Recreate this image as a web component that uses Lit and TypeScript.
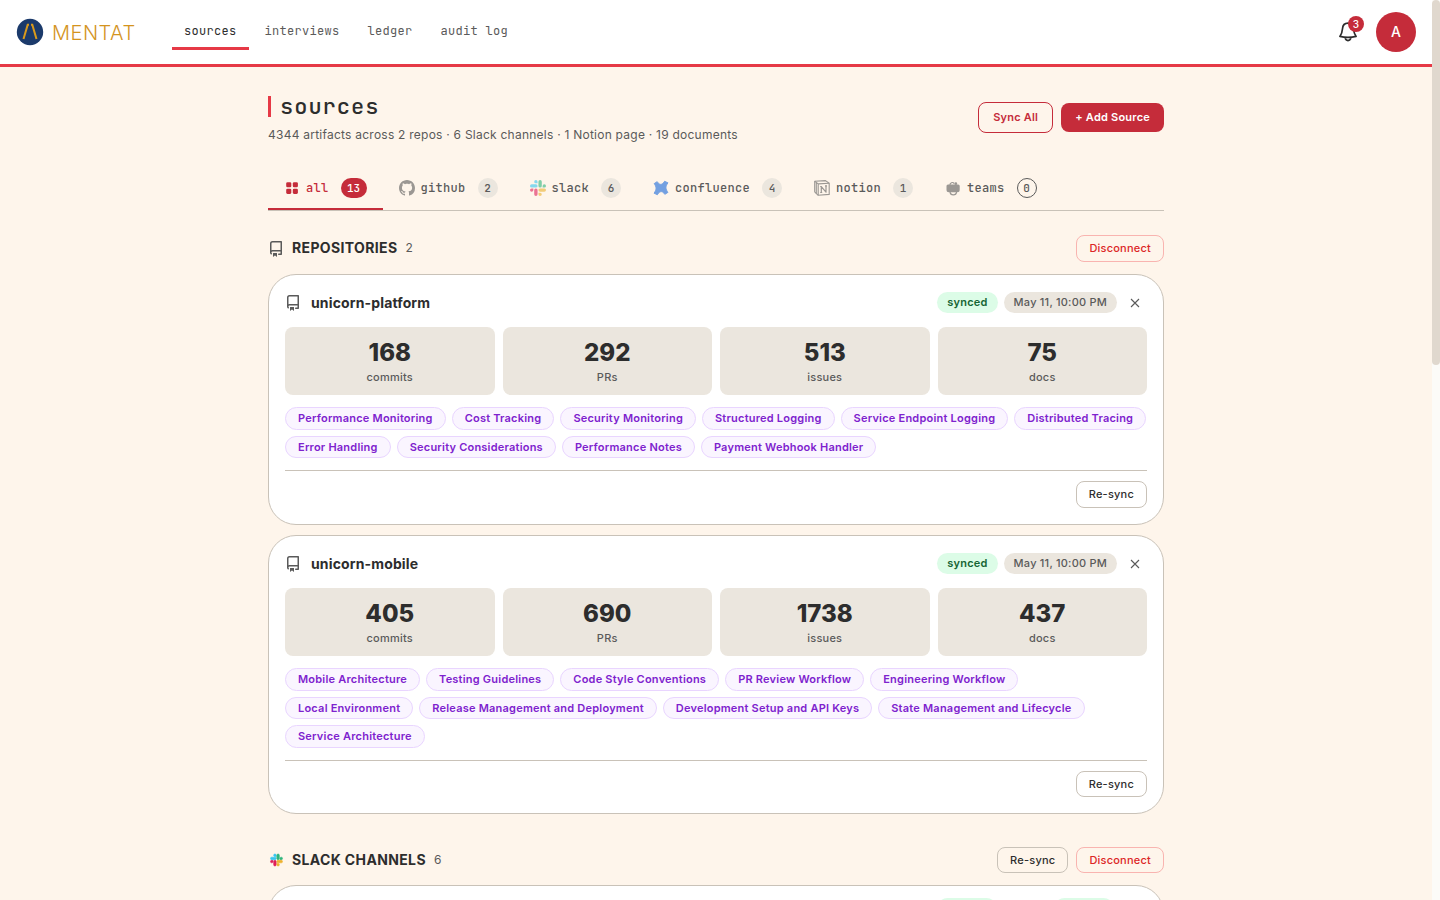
import { LitElement, html, css, svg } from "lit";
import { customElement, property } from "lit/decorators.js";

const repoIcon = html`<svg width="16" height="16" viewBox="0 0 16 16" fill="currentColor"><path d="M2 2.5A2.5 2.5 0 0 1 4.5 0h8.75a.75.75 0 0 1 .75.75v12.5a.75.75 0 0 1-.75.75h-2.5a.75.75 0 0 1 0-1.5h1.75v-2h-8a1 1 0 0 0-.714 1.7.75.75 0 1 1-1.072 1.05A2.495 2.495 0 0 1 2 11.5Zm10.5-1h-8a1 1 0 0 0-1 1v6.708A2.486 2.486 0 0 1 4.5 9h8ZM5 12.25a.25.25 0 0 1 .25-.25h3.5a.25.25 0 0 1 .25.25v3.25a.25.25 0 0 1-.4.2l-1.45-1.087a.249.249 0 0 0-.3 0L5.4 15.7a.25.25 0 0 1-.4-.2Z"/></svg>`;

const slackPaths = svg`
  <path fill="#E01E5A" stroke="#E01E5A" d="M5.042 15.165a2.528 2.528 0 0 1-2.52 2.523A2.528 2.528 0 0 1 0 15.165a2.527 2.527 0 0 1 2.522-2.52h2.52v2.52zM6.313 15.165a2.527 2.527 0 0 1 2.521-2.52 2.527 2.527 0 0 1 2.521 2.52v6.313A2.528 2.528 0 0 1 8.834 24a2.528 2.528 0 0 1-2.521-2.522v-6.313z"/>
  <path fill="#36C5F0" stroke="#36C5F0" d="M8.834 5.042a2.528 2.528 0 0 1-2.521-2.52A2.528 2.528 0 0 1 8.834 0a2.528 2.528 0 0 1 2.521 2.522v2.52H8.834zM8.834 6.313a2.528 2.528 0 0 1 2.521 2.521 2.528 2.528 0 0 1-2.521 2.521H2.522A2.528 2.528 0 0 1 0 8.834a2.528 2.528 0 0 1 2.522-2.521h6.312z"/>
  <path fill="#2EB67D" stroke="#2EB67D" d="M18.956 8.834a2.528 2.528 0 0 1 2.522-2.521A2.528 2.528 0 0 1 24 8.834a2.528 2.528 0 0 1-2.522 2.521h-2.522V8.834zM17.688 8.834a2.528 2.528 0 0 1-2.523 2.521 2.527 2.527 0 0 1-2.52-2.521V2.522A2.527 2.527 0 0 1 15.165 0a2.528 2.528 0 0 1 2.523 2.522v6.312z"/>
  <path fill="#ECB22E" stroke="#ECB22E" d="M15.165 18.956a2.528 2.528 0 0 1 2.523 2.522A2.528 2.528 0 0 1 15.165 24a2.527 2.527 0 0 1-2.52-2.522v-2.522h2.52zM15.165 17.688a2.527 2.527 0 0 1-2.52-2.523 2.526 2.526 0 0 1 2.52-2.52h6.313A2.527 2.527 0 0 1 24 15.165a2.528 2.528 0 0 1-2.522 2.523h-6.313z"/>`;

const tabIcons: Record<string, unknown> = {
  all: html`<svg width="16" height="16" viewBox="0 0 16 16" fill="#c52c3a"><rect x="2.200" y="2.200" width="5.100" height="5.100" rx="1.3"/><rect x="8.800" y="2.200" width="5.100" height="5.100" rx="1.3"/><rect x="2.200" y="8.800" width="5.100" height="5.100" rx="1.3"/><rect x="8.800" y="8.800" width="5.100" height="5.100" rx="1.3"/></svg>`,
  github: html`<svg class="dim" width="16" height="16" viewBox="0 0 16 16" fill="#5a5a5a"><path d="M8 0C3.58 0 0 3.58 0 8c0 3.54 2.29 6.53 5.47 7.59.4.07.55-.17.55-.38 0-.19-.01-.82-.01-1.49-2.01.37-2.53-.49-2.69-.94-.09-.23-.48-.94-.82-1.13-.28-.15-.68-.52-.01-.53.63-.01 1.08.58 1.23.82.72 1.21 1.87.87 2.33.66.07-.52.28-.87.51-1.07-1.78-.2-3.64-.89-3.64-3.95 0-.87.31-1.59.82-2.15-.08-.2-.36-1.02.08-2.12 0 0 .67-.21 2.2.82.64-.18 1.32-.27 2-.27s1.36.09 2 .27c1.53-1.04 2.2-.82 2.2-.82.44 1.1.16 1.92.08 2.12.51.56.82 1.27.82 2.15 0 3.07-1.87 3.75-3.65 3.95.29.25.54.73.54 1.48 0 1.07-.01 1.93-.01 2.2 0 .21.15.46.55.38A8.01 8.01 0 0 0 16 8c0-4.42-3.58-8-8-8z"/></svg>`,
  slack: html`<svg class="dim" width="16" height="16" viewBox="0 0 24 24" stroke-width="0">${slackPaths}</svg>`,
  confluence: html`<svg class="dim" width="16" height="16" viewBox="0 0 16 16" fill="#1868db" stroke="#1868db" stroke-width="1" stroke-linejoin="round"><path d="M1.200 3.600 4.200 1.700C6.500 5.300 9 5.400 11.600 1.300L14.900 2.800C12.200 6.800 12.400 9 14.900 12.400L11.800 14.300C9.500 10.700 7 10.600 4.400 14.700L1.100 13.200C3.800 9.200 3.600 7 1.200 3.600Z"/></svg>`,
  notion: html`<svg class="dim" width="16" height="16" viewBox="0 0 16 16" fill="none" stroke="#5a5a5a" stroke-width="1.100" stroke-linejoin="round"><path d="M.7 1.200 11.500.6l3.700 2.600v11.200l-11 .9L.7 11.800z"/><path d="M.7 1.200l3.500 2.700 11-.7M4.200 3.900v11.400M2.300 3v10.600"/><path d="M7.300 12.500V6.600l4.700 5.600V5.900M6.200 6.500h1.600M11 5.900h2M6.200 12.500h2" stroke-width="1.200"/></svg>`,
  teams: html`<svg class="dim" width="16" height="16" viewBox="0 0 16 16" fill="#5a5a5a"><path d="M5 5.200a2.300 2.300 0 0 1 4.200-1.600" fill="none" stroke="#5a5a5a" stroke-width="1.200"/><circle cx="10.800" cy="3.700" r="1.400"/><path d="M3 4.600h10.200a1.500 1.500 0 0 1 1.500 1.500v3.600a2.500 2.500 0 0 1-2.500 2.500H4a2.500 2.500 0 0 1-2.500-2.500V6.100A1.500 1.500 0 0 1 3 4.600z"/><path d="M5 11.600c.2 2.300 1.500 3.300 3.300 3.300s3.100-1 3.300-3.300" fill="none" stroke="#5a5a5a" stroke-width="1.200"/></svg>`,
};

interface Repo {
  name: string;
  stats: [string, string][];
  topics: string[];
}

const repos: Repo[] = [
  {
    name: "unicorn-platform",
    stats: [["168", "commits"], ["292", "PRs"], ["513", "issues"], ["75", "docs"]],
    topics: ["Performance Monitoring", "Cost Tracking", "Security Monitoring", "Structured Logging", "Service Endpoint Logging", "Distributed Tracing", "Error Handling", "Security Considerations", "Performance Notes", "Payment Webhook Handler"],
  },
  {
    name: "unicorn-mobile",
    stats: [["405", "commits"], ["690", "PRs"], ["1738", "issues"], ["437", "docs"]],
    topics: ["Mobile Architecture", "Testing Guidelines", "Code Style Conventions", "PR Review Workflow", "Engineering Workflow", "Local Environment", "Release Management and Deployment", "Development Setup and API Keys", "State Management and Lifecycle", "Service Architecture"],
  },
];

const tabs: [string, number][] = [["all", 13], ["github", 2], ["slack", 6], ["confluence", 4], ["notion", 1], ["teams", 0]];

const shared = css`
  * { box-sizing: border-box; }
  svg { display: block; flex: none; }
  .btn {
    height: 26.5px;
    padding: 0 12px;
    border: 1px solid #c9c2b8;
    border-radius: 8px;
    background: transparent;
    color: #2d2d2d;
    font: 500 11px/24.5px Inter, sans-serif;
    letter-spacing: 0.22px;
    white-space: nowrap;
  }
  .btn.danger { color: #dc2626; border-color: #f9b4b0; }
`;

@customElement("repo-card")
class RepoCard extends LitElement {
  @property({ attribute: false }) repo!: Repo;

  static styles = [shared, css`
    :host {
      display: block;
      box-sizing: border-box;
      padding: 16px;
      border: 1px solid #c9c2b8;
      border-radius: 28px;
      background: #fff;
    }
    .head { display: flex; align-items: center; height: 24px; margin-bottom: 12px; }
    .head svg { color: #5a5a5a; }
    .name { margin-left: 10px; font-size: 14px; font-weight: 700; letter-spacing: 0.14px; flex: 1; }
    .pill { height: 21px; line-height: 21px; padding: 0 10px; border-radius: 11px; font-size: 11px; font-weight: 500; letter-spacing: 0.22px; background: #ebe6de; color: #5a5a5a; margin-left: 6px; }
    .pill.ok { background: #dcfce7; color: #166534; font-weight: 600; }
    .close { width: 24px; height: 24px; display: grid; place-items: center; margin-left: 6px; }
    .stats { display: grid; grid-template-columns: repeat(4, 1fr); gap: 8px; margin-bottom: 12px; }
    .stat { height: 68.5px; border-radius: 8px; background: #ebe6de; text-align: center; padding-top: 10px; }
    .num { font-size: 24px; line-height: 32px; font-weight: 800; letter-spacing: 0; }
    .label { font-size: 11px; line-height: 16px; font-weight: 500; color: #5a5a5a; letter-spacing: 0.22px; }
    .topics { display: flex; flex-wrap: wrap; gap: 6px; }
    .topic { height: 22.5px; padding: 0 12px; border: 1px solid #e9d5ff; border-radius: 12px; background: #faf5ff; color: #7e22ce; font-size: 11px; line-height: 20.5px; font-weight: 600; letter-spacing: 0.22px; white-space: nowrap; }
    .foot { display: flex; justify-content: flex-end; margin-top: 12px; padding-top: 10px; border-top: 1px solid #c9c2b8; }
  `];

  render() {
    return html`
      <div class="head">
        ${repoIcon}<span class="name">${this.repo.name}</span>
        <span class="pill ok">synced</span><span class="pill">May 11, 10:00 PM</span>
        <span class="close"><svg width="10" height="10" viewBox="0 0 10 10" stroke="#5a5a5a" stroke-width="1.1"><path d="M1 1l8 8M9 1L1 9"/></svg></span>
      </div>
      <div class="stats">${this.repo.stats.map(([n, l]) => html`<div class="stat"><div class="num">${n}</div><div class="label">${l}</div></div>`)}</div>
      <div class="topics">${this.repo.topics.map((t) => html`<span class="topic">${t}</span>`)}</div>
      <div class="foot"><button class="btn">Re-sync</button></div>
    `;
  }
}

@customElement("app-root")
class AppRoot extends LitElement {
  static styles = [shared, css`
    :host {
      display: flex;
      height: 900px;
      overflow: hidden;
      background: #fef5eb;
      color: #2d2d2d;
      font-family: Inter, sans-serif;
    }
    .page { flex: 1; min-width: 0; display: flex; flex-direction: column; }
    .scroll { width: 8px; background: #fcfbf8; }
    .thumb { height: 365px; border-radius: 4px; background: #e0d8ce; }
    .mono { font-family: "JetBrains Mono", "DejaVu Sans Mono", monospace; }
    header { flex: none; height: 67px; border-bottom: 3px solid #e63946; background: #fff; display: flex; align-items: center; padding: 0 16px; }
    .brand { display: flex; align-items: center; width: 156px; color: #d4941e; font-size: 20px; font-weight: 300; letter-spacing: 0.5px; }
    .brand svg { margin-right: 8px; }
    .brand span { padding-top: 1px; }
    nav { display: flex; gap: 4px; flex: 1; font-size: 12px; letter-spacing: 0.3px; color: #5a5a5a; }
    nav span { padding: 2px 12px 0; height: 36px; line-height: 30px; border-bottom: 3px solid transparent; white-space: pre; }
    nav .on { color: #2d2d2d; border-color: #e63946; }
    .bell { position: relative; margin-right: 18px; }
    .bell b { position: absolute; left: 10px; top: -6px; width: 16px; height: 16px; border-radius: 8px; background: #c52c3a; color: #fff; font: 500 10px/16px Inter, sans-serif; text-align: center; }
    .avatar { width: 40px; height: 40px; border-radius: 20px; background: #c52c3a; color: #fff; font-size: 14px; font-weight: 500; line-height: 40px; text-align: center; }
    main { width: 896px; margin: 0 auto; padding-top: 29px; flex: 1; min-height: 0; }
    .top { display: flex; align-items: flex-start; height: 70px; }
    .titles { flex: 1; }
    h1 { margin: 0; display: flex; align-items: center; height: 21px; padding-left: 9px; border-left: 3px solid #e63946; font-size: 22px; font-weight: 500; letter-spacing: 1px; }
    .sub { margin-top: 10px; font-size: 12px; line-height: 16px; color: #5a5a5a; letter-spacing: 0.24px; }
    .sync, .add { height: 30.5px; border-radius: 8px; font-size: 11px; font-weight: 600; letter-spacing: 0.22px; padding: 0 14px; line-height: 28px; }
    .sync { margin-top: 6px; border: 1px solid #c52c3a; color: #c52c3a; }
    .add { margin: 7px 0 0 8px; height: 28.5px; background: #c52c3a; color: #fff; }
    .tabs { display: flex; height: 45px; border-bottom: 1px solid #c9c2b8; }
    .tab { display: flex; align-items: center; height: 44px; padding: 2px 16px 0; font-size: 12px; font-weight: 500; letter-spacing: 0.3px; color: #5a5a5a; border-bottom: 2px solid transparent; }
    .tab svg { margin-right: 6px; }
    .dim { opacity: 0.6; }
    .count { margin-left: 12px; min-width: 20px; height: 20px; line-height: 20px; border-radius: 10px; background: #ebe6de; font-size: 11px; font-weight: 500; letter-spacing: 0; text-align: center; }
    .tab.on { color: #c52c3a; border-color: #c52c3a; }
    .on .count { background: #c52c3a; color: #fff; width: 26px; }
    .count.zero { background: transparent; border: 1px solid #5a5a5a; line-height: 18px; }
    .section { display: flex; align-items: center; height: 26.5px; margin: 24px 0 12px; gap: 8px; }
    .section.later { margin-top: 32.5px; }
    .section > svg { color: #5a5a5a; margin-top: 1px; }
    .section.later > svg { margin-top: 0; }
    .section h2 { margin: 0; padding-bottom: 1px; font-size: 14px; font-weight: 700; letter-spacing: 0.36px; }
    .section i { font: 400 12px Inter, sans-serif; color: #5a5a5a; flex: 1; padding-bottom: 1px; }
    repo-card + repo-card { margin-top: 10px; }
    .stub { height: 200px; border: 1px solid #c9c2b8; border-radius: 28px; background: #fff; padding: 12px 49px 0 0; display: flex; justify-content: flex-end; gap: 57px; }
    .stub span { width: 60px; height: 21px; border-radius: 11px; background: #dcfce7; }
  `];

  render() {
    return html`
      <div class="page">
        <header>
          <div class="brand">
            <svg width="28" height="28" viewBox="0 0 28 28"><circle cx="14" cy="14" r="13.200" fill="#1b3a6b"/><path d="M7.500 21 11.700 6.800h1.300M15 6.800h1.300L20.500 21" fill="none" stroke="#d99a1c" stroke-width="2"/></svg><span>MENTAT</span>
          </div>
          <nav class="mono"><span class="on">sources</span><span>interviews</span><span>ledger</span><span>audit log</span></nav>
          <div class="bell">
            <svg width="20" height="20" viewBox="0 0 20 20" fill="none" stroke="#2d2d2d" stroke-width="1.700" stroke-linejoin="round"><path d="M10 1.200c-3.300 0-5.300 2.400-5.500 5.600-.2 3-.8 5-2.600 7.600q8.100 1.800 16.200 0c-1.800-2.600-2.400-4.600-2.600-7.600-.2-3.200-2.200-5.600-5.500-5.600zM7 15c.3 2.500 1.400 3.600 3 3.600s2.700-1.100 3-3.600"/></svg><b>3</b>
          </div>
          <div class="avatar">A</div>
        </header>
        <main>
          <div class="top">
            <div class="titles">
              <h1 class="mono">sources</h1>
              <div class="sub">4344 artifacts across 2 repos · 6 Slack channels · 1 Notion page · 19 documents</div>
            </div>
            <div class="sync">Sync All</div>
            <div class="add">+ Add Source</div>
          </div>
          <div class="tabs mono">
            ${tabs.map(([name, n]) => html`<div class="tab ${name === "all" ? "on" : ""}">${tabIcons[name]}${name}<span class="count ${n ? "" : "zero"}">${n}</span></div>`)}
          </div>
          <div class="section">${repoIcon}<h2>REPOSITORIES</h2><i>2</i><button class="btn danger">Disconnect</button></div>
          ${repos.map((r) => html`<repo-card .repo=${r}></repo-card>`)}
          <div class="section later">
            <svg width="16" height="16" viewBox="-5 -4 32 32" stroke-width="1.200">${slackPaths}</svg>
            <h2>SLACK CHANNELS</h2><i>6</i><button class="btn">Re-sync</button><button class="btn danger">Disconnect</button>
          </div>
          <div class="stub"><span></span><span></span></div>
        </main>
      </div>
      <div class="scroll"><div class="thumb"></div></div>
    `;
  }
}
